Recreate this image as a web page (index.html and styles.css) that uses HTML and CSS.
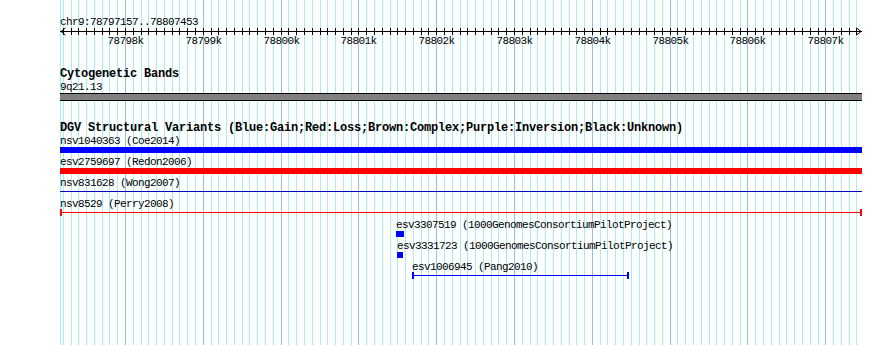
FILE: index.html
```html
<!DOCTYPE html>
<html lang="en">
<head>
	<meta charset="UTF-8">
	<meta name="viewport" content="width=device-width, initial-scale=1.0">
	<title>chr9:78797157..78807453</title>
	<link rel="stylesheet" href="styles.css">
</head>
<body>
	<div class="panel">
		<svg class="grid" id="grid" width="890" height="345"></svg>

		<div class="tracks">
			<div class="chrname">chr9:78797157..78807453</div>
			<svg class="ruler" id="ruler" width="802" height="20"></svg>

			<div class="track-title">Cytogenetic Bands</div>
			<div class="flabel">9q21.13</div>
			<div class="band"></div>

			<div class="track-title dgv">DGV Structural Variants (Blue:Gain;Red:Loss;Brown:Complex;Purple:Inversion;Black:Unknown)</div>

			<div class="feature">
				<div class="flabel">nsv1040363 (Coe2014)</div>
				<div class="glyph bar gain"></div>
			</div>
			<div class="feature">
				<div class="flabel">esv2759697 (Redon2006)</div>
				<div class="glyph bar loss"></div>
			</div>
			<div class="feature">
				<div class="flabel">nsv831628 (Wong2007)</div>
				<div class="glyph segment dark"><div class="line"></div></div>
			</div>
			<div class="feature">
				<div class="flabel">nsv8529 (Perry2008)</div>
				<div class="glyph segment loss"><div class="cap"></div><div class="line"></div><div class="cap"></div></div>
			</div>
			<div class="feature" style="margin-left: 336px">
				<div class="flabel">esv3307519 (1000GenomesConsortiumPilotProject)</div>
				<div class="glyph bar gain" style="width: 8px"></div>
			</div>
			<div class="feature" style="margin-left: 337px">
				<div class="flabel">esv3331723 (1000GenomesConsortiumPilotProject)</div>
				<div class="glyph bar gain" style="width: 6px"></div>
			</div>
			<div class="feature" style="margin-left: 352px">
				<div class="flabel">esv1006945 (Pang2010)</div>
				<div class="glyph segment gain" style="width: 217px"><div class="cap"></div><div class="line"></div><div class="cap"></div></div>
			</div>
		</div>
	</div>

	<script>
		const svgNS = 'http://www.w3.org/2000/svg';
		const left = 60;
		const grid = document.querySelector('#grid');
		const ruler = document.querySelector('#ruler');

		// 78798k sits at x=125, 0.07781 px per bp
		function xpos(bp) {
			return Math.round(125 + (bp - 78798000) * 0.07781);
		}

		function add(parent, tag, attrs, text) {
			const el = document.createElementNS(svgNS, tag);
			for (let key in attrs) el.setAttribute(key, attrs[key]);
			if (text) el.textContent = text;
			parent.appendChild(el);
			return el;
		}

		add(grid, 'rect', {x: 60, y: 0, width: 1, height: 345, class: 'minor'});
		add(ruler, 'rect', {x: 0, y: 3, width: 802, height: 1, class: 'axis'});
		add(ruler, 'path', {d: 'M5.5,0 L1,3.5 L5.5,7', class: 'arrow'});
		add(ruler, 'path', {d: 'M796.5,0 L801,3.5 L796.5,7', class: 'arrow'});

		for (let bp = 78797200; bp <= 78807400; bp += 100) {
			const x = xpos(bp);
			const major = bp % 1000 === 0;
			add(grid, 'rect', {x: x, y: 0, width: 1, height: 345, class: major ? 'major' : 'minor'});
			add(ruler, 'rect', {x: x - left, y: 0, width: 1, height: 7, class: 'axis'});
			if (major) {
				add(ruler, 'text', {x: x - left + 0.5, y: 16, class: 'ticklabel'}, (bp / 1000) + 'k');
			}
		}
	</script>
</body>
</html>
```

FILE: styles.css
```css
*,
*::before,
*::after {
	padding: 0;
	margin: 0;
	box-sizing: border-box;
}
body {
	background: #fff;
	color: #000;
	font-family: "Liberation Mono", "DejaVu Sans Mono", monospace;
	font-size: 11px;
	letter-spacing: -0.6px;
}

.panel {
	position: relative;
	width: 890px;
	height: 345px;
	overflow: hidden;
}

/* vertical grid behind the tracks */
.grid {
	position: absolute;
	top: 0;
	left: 0;
	shape-rendering: crispEdges;
}
.grid .minor {
	fill: #a6eef0;
}
.grid .major {
	fill: #8cc4ea;
}

.tracks {
	position: relative;
	padding-top: 16px;
	padding-left: 60px;
}

.chrname,
.flabel {
	height: 12px;
	line-height: 12px;
	white-space: nowrap;
}

.ruler {
	display: block;
	overflow: visible;
}
.ruler .axis {
	fill: #000;
	shape-rendering: crispEdges;
}
.ruler .arrow {
	fill: none;
	stroke: #000;
	stroke-width: 1;
}
.ticklabel {
	font-family: "Liberation Mono", "DejaVu Sans Mono", monospace;
	font-size: 11px;
	letter-spacing: -0.6px;
	text-anchor: middle;
	fill: #000;
}

.track-title {
	margin-top: 20px;
	font-size: 12px;
	font-weight: bold;
	letter-spacing: -0.2px;
	line-height: 13px;
	white-space: nowrap;
}
.track-title.dgv {
	margin-top: 21px;
}

.band {
	width: 802px;
	height: 8px;
	background: #808080;
	border-top: 1px solid #000;
	border-bottom: 1px solid #000;
}

.feature {
	height: 21px;
}
.glyph {
	width: 802px;
	height: 6px;
}

.bar.gain {
	background: #0000ff;
}
.bar.loss {
	background: #ff0000;
}

.segment {
	display: flex;
	align-items: flex-start;
}
.segment .line {
	flex: 1;
	height: 1px;
	margin-top: 2px;
}
.segment .cap {
	width: 2px;
	height: 7px;
	margin-top: -1px;
}
.segment.dark .line {
	background: #0000c0;
}
.segment.loss .line,
.segment.loss .cap {
	background: #ff0000;
}
.segment.gain .line,
.segment.gain .cap {
	background: #0000ff;
}
```
